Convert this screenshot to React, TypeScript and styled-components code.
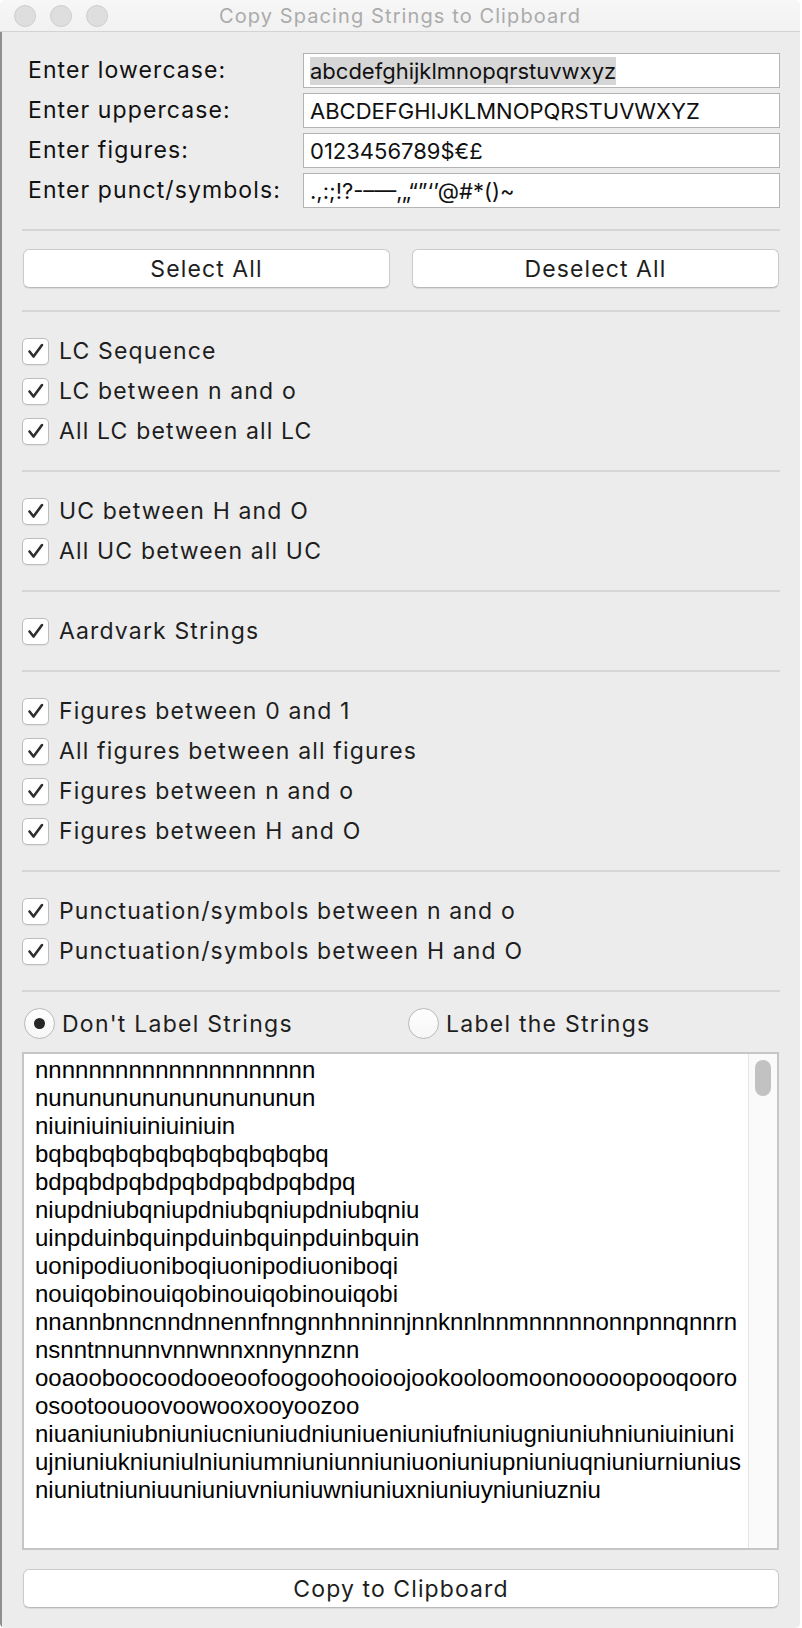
import React from 'react'
import styled, { createGlobalStyle } from 'styled-components'

const GlobalStyle = createGlobalStyle`
    html, body {
        margin: 0;
        padding: 0;
        background: #ffffff;
    }
    * {
        box-sizing: border-box;
    }
`

const UI_FONT = `Inter, 'Liberation Sans', sans-serif`

const Window = styled.div`
    width: 800px;
    height: 1628px;
    background: #ececec;
    border-radius: 6px 6px 5px 5px;
    overflow: hidden;
    display: flex;
    flex-direction: column;
    font-family: ${UI_FONT};
    color: #1d1d1d;
`

const TitleBar = styled.div`
    height: 32px;
    flex: none;
    display: flex;
    align-items: center;
    position: relative;
    background: linear-gradient(#f7f7f7, #f1f1f1);
    border-bottom: 1px solid #d3d3d3;
    padding-left: 14px;
    gap: 14px;
`

const Light = styled.span`
    width: 22px;
    height: 22px;
    border-radius: 50%;
    background: #dedede;
    border: 1px solid #cdcdcd;
`

const Title = styled.div`
    position: absolute;
    left: 0;
    right: 0;
    top: 0;
    bottom: 0;
    display: flex;
    align-items: center;
    justify-content: center;
    font-size: 20px;
    letter-spacing: 1.1px;
    color: #ababab;
    pointer-events: none;
`

const Body = styled.div`
    flex: 1;
    display: flex;
    flex-direction: column;
    padding: 21px 20px 0 22px;
    box-shadow: inset 2px 0 0 #8f8f8f;
`

const Fields = styled.div`
    display: grid;
    grid-template-columns: 281px 1fr;
    row-gap: 5px;
`

const FieldLabel = styled.div`
    height: 35px;
    line-height: 35px;
    padding-left: 6px;
    font-size: 23px;
    letter-spacing: 1.1px;
    color: #111;
`

const Field = styled.div`
    height: 35px;
    background: #fff;
    border: 1px solid #b4b4b4;
    padding: 4px 6px;
    display: flex;
    align-items: center;
    font-size: 22px;
    color: #111;
    white-space: nowrap;
    overflow: hidden;
`

const Selected = styled.span`
    background: #d6d6d6;
    line-height: 28px;
`

const Separator = styled.div<{ top?: number }>`
    height: 2px;
    background: #d6d6d6;
    margin-top: ${props => props.top ?? 0}px;
`

const ButtonRow = styled.div`
    display: flex;
    gap: 20px;
    margin-top: 18px;
    margin-bottom: 22px;
`

const Button = styled.button`
    flex: 1;
    height: 39px;
    margin: 0 1px;
    background: #ffffff;
    border: 1px solid #cbcbcb;
    border-bottom-color: #b9b9b9;
    border-radius: 6px;
    box-shadow: 0 1px 1px rgba(0, 0, 0, 0.08);
    font-family: ${UI_FONT};
    font-size: 23px;
    letter-spacing: 1.1px;
    color: #1e1e1e;
    padding: 0;
`

const Group = styled.div`
    padding: 19px 0;
    display: flex;
    flex-direction: column;
`

const CheckRow = styled.label`
    height: 40px;
    display: flex;
    align-items: center;
    gap: 10px;
    font-size: 23px;
    letter-spacing: 1.15px;
    color: #1e1e1e;
`

const Box = styled.span`
    width: 27px;
    height: 27px;
    flex: none;
    border-radius: 5px;
    background: #fff;
    border: 1px solid #bdbdbd;
    box-shadow: 0 1px 1px rgba(0, 0, 0, 0.06);
    display: flex;
    align-items: center;
    justify-content: center;
`

const RadioRow = styled.div`
    display: flex;
    align-items: center;
    padding: 16px 0 13px 2px;
`

const RadioOption = styled.label<{ width?: number }>`
    display: flex;
    align-items: center;
    gap: 7px;
    height: 31px;
    width: ${props => (props.width ? `${props.width}px` : 'auto')};
    font-size: 23px;
    letter-spacing: 1.25px;
    color: #1e1e1e;
`

const RadioCircle = styled.span<{ on?: boolean }>`
    width: 31px;
    height: 31px;
    flex: none;
    border-radius: 50%;
    background: linear-gradient(#ffffff, #f6f6f6);
    border: 1px solid #b9b9b9;
    display: flex;
    align-items: center;
    justify-content: center;
    &::after {
        content: '';
        display: ${props => (props.on ? 'block' : 'none')};
        width: 11px;
        height: 11px;
        border-radius: 50%;
        background: #262626;
    }
`

const TextArea = styled.div`
    height: 498px;
    flex: none;
    background: #fff;
    border: 2px solid #c6c6c6;
    display: flex;
    margin-right: 1px;
`

const TextLines = styled.div`
    flex: 1;
    padding: 2px 0 0 11px;
    font-family: 'Liberation Sans', Arial, sans-serif;
    font-size: 24px;
    line-height: 28px;
    color: #000;
    white-space: pre;
    overflow: hidden;
`

const Track = styled.div`
    width: 29px;
    flex: none;
    background: #fafafa;
    border-left: 1px solid #e6e6e6;
    padding: 6px 0 0 6px;
`

const Thumb = styled.div`
    width: 16px;
    height: 36px;
    border-radius: 8px;
    background: #c2c2c2;
`

const CopyButton = styled(Button)`
    flex: none;
    margin-top: 19px;
`

const Check = () => (
    <svg width="18" height="18" viewBox="0 0 18 18">
        <path d="M2.5 9.5 L6.5 14.5 L15 3" fill="none" stroke="#2e2e2e" strokeWidth="2.6" strokeLinecap="round" strokeLinejoin="round" />
    </svg>
)

const groups: string[][] = [
    ['LC Sequence', 'LC between n and o', 'All LC between all LC'],
    ['UC between H and O', 'All UC between all UC'],
    ['Aardvark Strings'],
    ['Figures between 0 and 1', 'All figures between all figures', 'Figures between n and o', 'Figures between H and O'],
    ['Punctuation/symbols between n and o', 'Punctuation/symbols between H and O'],
]

const lines = [
    'nnnnnnnnnnnnnnnnnnnnn',
    'nunununununununununun',
    'niuiniuiniuiniuiniuin',
    'bqbqbqbqbqbqbqbqbqbqbq',
    'bdpqbdpqbdpqbdpqbdpqbdpq',
    'niupdniubqniupdniubqniupdniubqniu',
    'uinpduinbquinpduinbquinpduinbquin',
    'uonipodiuoniboqiuonipodiuoniboqi',
    'nouiqobinouiqobinouiqobinouiqobi',
    'nnannbnncnndnnennfnngnnhnninnjnnknnlnnmnnnnnonnpnnqnnrn',
    'nsnntnnunnvnnwnnxnnynnznn',
    'ooaooboocoodooeoofoogoohooioojookooloomoonooooopooqooro',
    'osootoouoovoowooxooyoozoo',
    'niuaniuniubniuniucniuniudniuniueniuniufniuniugniuniuhniuniuiniuni',
    'ujniuniukniuniulniuniumniuniunniuniuoniuniupniuniuqniuniurniunius',
    'niuniutniuniuuniuniuvniuniuwniuniuxniuniuyniuniuzniu',
]

const App: React.FC = () => {
    return (
        <Window>
            <GlobalStyle />
            <TitleBar>
                <Light />
                <Light />
                <Light />
                <Title>Copy Spacing Strings to Clipboard</Title>
            </TitleBar>

            <Body>
                <Fields>
                    <FieldLabel>Enter lowercase:</FieldLabel>
                    <Field><Selected>abcdefghijklmnopqrstuvwxyz</Selected></Field>
                    <FieldLabel>Enter uppercase:</FieldLabel>
                    <Field>ABCDEFGHIJKLMNOPQRSTUVWXYZ</Field>
                    <FieldLabel>Enter figures:</FieldLabel>
                    <Field>0123456789$€£</Field>
                    <FieldLabel>Enter punct/symbols:</FieldLabel>
                    <Field>.,:;!?-–—‚„“”‘’@#*()~</Field>
                </Fields>

                <Separator top={21} />
                <ButtonRow>
                    <Button>Select All</Button>
                    <Button>Deselect All</Button>
                </ButtonRow>
                <Separator />

                {groups.map((items, i) => (
                    <React.Fragment key={i}>
                        <Group>
                            {items.map(item => (
                                <CheckRow key={item}>
                                    <Box><Check /></Box>
                                    {item}
                                </CheckRow>
                            ))}
                        </Group>
                        <Separator />
                    </React.Fragment>
                ))}

                <RadioRow>
                    <RadioOption width={384}>
                        <RadioCircle on />
                        Don't Label Strings
                    </RadioOption>
                    <RadioOption>
                        <RadioCircle />
                        Label the Strings
                    </RadioOption>
                </RadioRow>

                <TextArea>
                    <TextLines>{lines.join('\n')}</TextLines>
                    <Track>
                        <Thumb />
                    </Track>
                </TextArea>

                <CopyButton>Copy to Clipboard</CopyButton>
            </Body>
        </Window>
    )
}

export default App
